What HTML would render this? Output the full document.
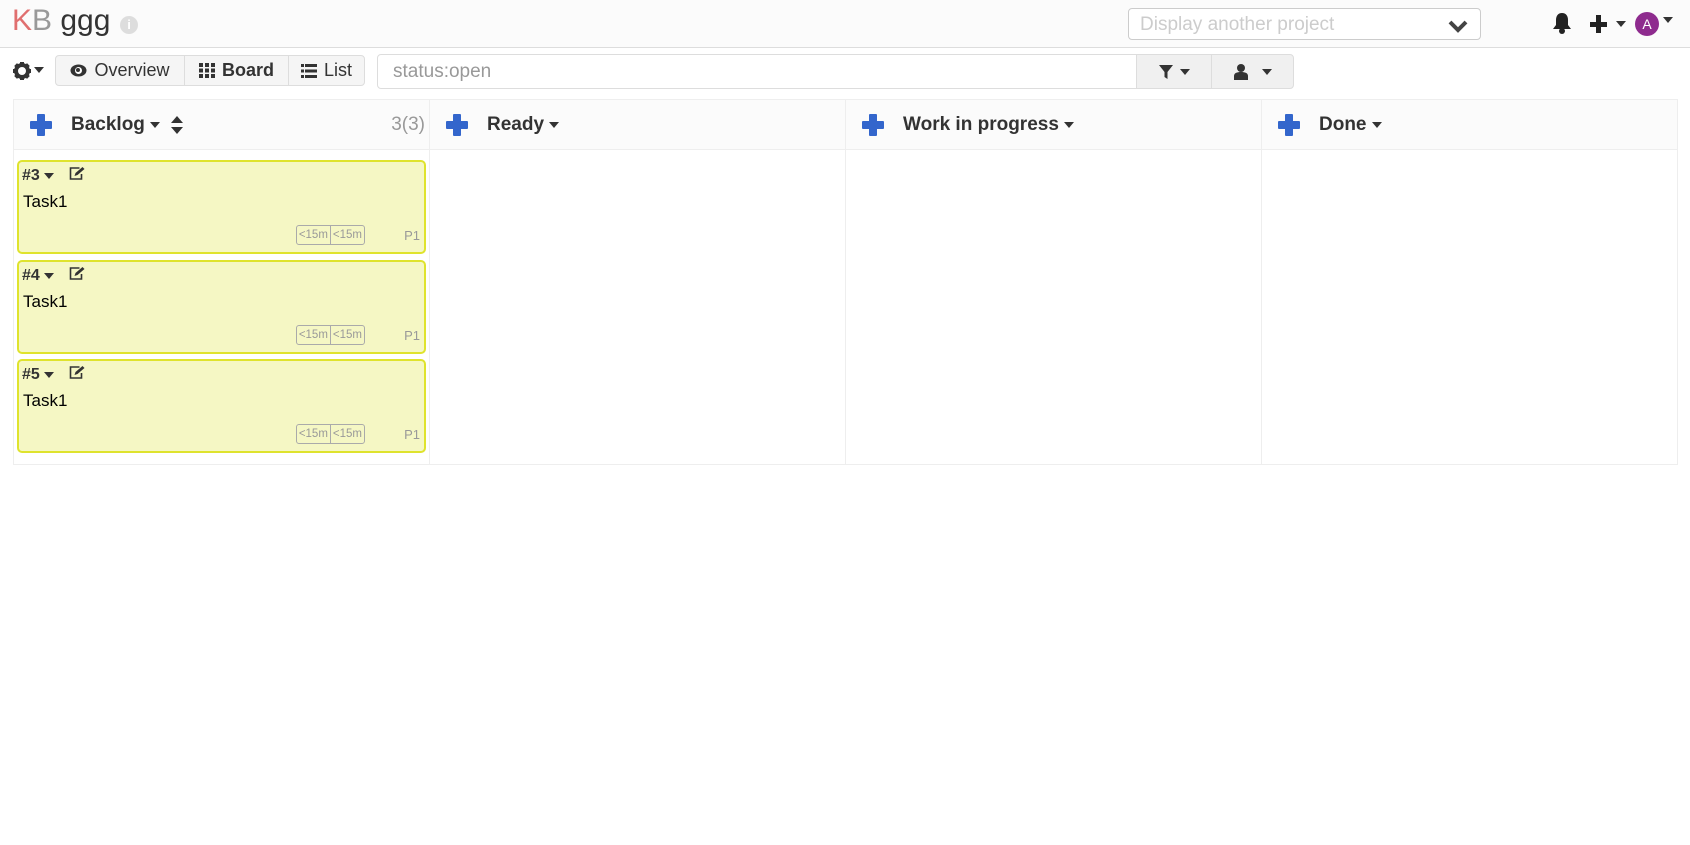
<!DOCTYPE html>
<html><head><meta charset="utf-8"><style>
*{box-sizing:border-box;margin:0;padding:0}
body{width:1690px;height:845px;background:#fff;font-family:"Liberation Sans",Arial,sans-serif;color:#333;position:relative;overflow:hidden}
.abs{position:absolute}
.hdr{left:0;top:0;width:1690px;height:48px;background:#fbfbfb;border-bottom:1px solid #ddd}
.caret{display:inline-block;width:0;height:0;border-left:5px solid transparent;border-right:5px solid transparent;border-top:6px solid #333;vertical-align:middle}
.btn{position:absolute;top:55px;height:31px;border:1px solid #ddd;background:#f5f5f5;font-size:18px;display:flex;align-items:center;justify-content:center;gap:7px}
.col{position:absolute;top:99px;height:366px;width:416px;border:1px solid #eee;border-right:none}
.colh{height:50px;background:#fbfbfb;border-bottom:1px solid #eee;display:flex;align-items:center;padding-left:16px;font-weight:bold;font-size:19px;color:#333}
.plus{width:22px;height:22px;position:relative;margin-right:19px}
.plus:before{content:"";position:absolute;left:7px;top:0;width:8px;height:22px;background:#3366cc;border-radius:1px}
.plus:after{content:"";position:absolute;left:0;top:7px;width:22px;height:8px;background:#3366cc;border-radius:1px}
.card{position:absolute;left:17px;width:409px;height:94px;background:#f5f7c4;border:2px solid #dfe32d;border-radius:5px}
.card .id{position:absolute;left:3px;top:4px;font-weight:bold;font-size:16px}
.card .t{position:absolute;left:4px;top:30px;font-size:17px;color:#000}
.card .bd{position:absolute;right:59px;bottom:7px;height:20px;border:1px solid #aaa;border-radius:3px;font-size:11.5px;color:#999;display:flex}
.card .bd span{padding:0 2px;line-height:18px}
.card .p{position:absolute;right:4px;bottom:9px;font-size:13px;color:#999}
</style></head><body>
<div class="abs hdr"></div>
<div class="abs" style="left:12px;top:4px;font-size:30px;color:#333;letter-spacing:0"><span style="color:#e06f6f">K</span><span style="color:#999">B</span> ggg</div>
<div class="abs" style="left:120px;top:16px;width:18px;height:18px;border-radius:50%;background:#ddd;color:#fff;font-size:13px;font-weight:bold;text-align:center;line-height:18px">i</div>
<div class="abs" style="left:1128px;top:8px;width:353px;height:32px;border:1px solid #ccc;border-radius:4px;background:#fff;font-size:19px;color:#ccc;padding:5px 11px">Display another project
<svg class="abs" style="right:12px;top:10px" width="20" height="14" viewBox="0 0 20 14"><path d="M2 3l8 8 8-8" stroke="#444" stroke-width="4" fill="none"/></svg></div>
<svg class="abs" style="left:1552px;top:12px" width="20" height="22" viewBox="0 0 20 22"><path d="M10 1c-4 0-6 3-6 7v5l-3 4h18l-3-4V8c0-4-2-7-6-7z" fill="#222"/><circle cx="10" cy="19" r="3" fill="#222"/></svg>
<div class="abs" style="left:1590px;top:22px;width:17px;height:5px;background:#222"></div>
<div class="abs" style="left:1596px;top:15px;width:5px;height:18px;background:#222"></div>
<span class="caret abs" style="left:1616px;top:21px"></span>
<div class="abs" style="left:1635px;top:12px;width:24px;height:24px;border-radius:50%;background:#8e2b8e;color:#fff;font-size:14px;text-align:center;line-height:24px">A</div>
<span class="caret abs" style="left:1663px;top:17px"></span>

<svg class="abs" style="left:12px;top:61px" width="20" height="20" viewBox="0 0 20 20"><circle cx="10" cy="10" r="6" fill="none" stroke="#333" stroke-width="4"/><g stroke="#333" stroke-width="4"><path d="M10 1v4M10 15v4M1 10h4M15 10h4M3.6 3.6l3 3M13.4 13.4l3 3M3.6 16.4l3-3M13.4 6.6l3-3"/></g></svg>
<span class="caret abs" style="left:34px;top:67px"></span>
<div class="btn" style="left:55px;width:130px;border-radius:4px 0 0 4px"><svg width="17" height="13" viewBox="0 0 17 13"><ellipse cx="8.5" cy="6.5" rx="8" ry="6" fill="#333"/><circle cx="8.5" cy="6.5" r="3.5" fill="#fff"/><circle cx="8" cy="6" r="2" fill="#333"/></svg>Overview</div>
<div class="btn" style="left:184px;width:105px;font-weight:bold;background:#f5f5f5"><svg width="16" height="15" viewBox="0 0 16 15"><g fill="#333"><rect x="0" y="0" width="4" height="4"/><rect x="6" y="0" width="4" height="4"/><rect x="12" y="0" width="4" height="4"/><rect x="0" y="5.5" width="4" height="4"/><rect x="6" y="5.5" width="4" height="4"/><rect x="12" y="5.5" width="4" height="4"/><rect x="0" y="11" width="4" height="4"/><rect x="6" y="11" width="4" height="4"/><rect x="12" y="11" width="4" height="4"/></g></svg>Board</div>
<div class="btn" style="left:288px;width:77px;border-radius:0 4px 4px 0"><svg width="16" height="14" viewBox="0 0 16 14"><g fill="#333"><rect x="0" y="0" width="3" height="3"/><rect x="4" y="0" width="12" height="3"/><rect x="0" y="5.5" width="3" height="3"/><rect x="4" y="5.5" width="12" height="3"/><rect x="0" y="11" width="3" height="3"/><rect x="4" y="11" width="12" height="3"/></g></svg>List</div>
<div class="abs" style="left:377px;top:54px;width:760px;height:35px;border:1px solid #ddd;border-radius:4px 0 0 4px;font-size:19px;color:#999;padding:6px 15px">status:open</div>
<div class="btn" style="left:1136px;top:54px;height:35px;width:76px;background:#f0f0f0"><svg width="14" height="14" viewBox="0 0 14 14"><path d="M0 0h14L8.5 7v7l-3-2V7z" fill="#333"/></svg><span class="caret"></span></div>
<div class="btn" style="left:1211px;top:54px;height:35px;width:83px;background:#f0f0f0;border-radius:0 4px 4px 0;gap:14px"><svg width="14" height="16" viewBox="0 0 14 16"><circle cx="7" cy="4" r="4" fill="#333"/><path d="M0 16v-4c0-3 3-4 7-4s7 1 7 4v4z" fill="#333"/></svg><span class="caret"></span></div>

<div class="col" style="left:13px"><div class="colh"><div class="plus"></div>Backlog&nbsp;<span class="caret"></span>&nbsp;&nbsp;<svg width="12" height="18" viewBox="0 0 12 18"><path d="M6 0l6 7H0zM6 18l6-7H0z" fill="#333"/></svg><span style="margin-left:auto;margin-right:4px;font-weight:normal;color:#999;font-size:19px">3(3)</span></div></div>
<div class="col" style="left:429px"><div class="colh"><div class="plus"></div>Ready&nbsp;<span class="caret"></span></div></div>
<div class="col" style="left:845px"><div class="colh"><div class="plus"></div>Work in progress&nbsp;<span class="caret"></span></div></div>
<div class="col" style="left:1261px;width:417px;border-right:1px solid #eee"><div class="colh"><div class="plus"></div>Done&nbsp;<span class="caret"></span></div></div>

<div class="card" style="top:160px"><div class="id">#3 <span class="caret"></span>&nbsp;&nbsp; <svg width="17" height="15" viewBox="0 0 16 15" style="vertical-align:-1px"><path d="M11 2H2v11h11V8" fill="none" stroke="#333" stroke-width="1.6"/><path d="M6 10l1-3 7-6 2 2-7 6z" fill="#333"/></svg></div><div class="t">Task1</div><div class="bd"><span>&lt;15m</span><span style="border-left:1px solid #aaa">&lt;15m</span></div><div class="p">P1</div></div>
<div class="card" style="top:260px"><div class="id">#4 <span class="caret"></span>&nbsp;&nbsp; <svg width="17" height="15" viewBox="0 0 16 15" style="vertical-align:-1px"><path d="M11 2H2v11h11V8" fill="none" stroke="#333" stroke-width="1.6"/><path d="M6 10l1-3 7-6 2 2-7 6z" fill="#333"/></svg></div><div class="t">Task1</div><div class="bd"><span>&lt;15m</span><span style="border-left:1px solid #aaa">&lt;15m</span></div><div class="p">P1</div></div>
<div class="card" style="top:359px"><div class="id">#5 <span class="caret"></span>&nbsp;&nbsp; <svg width="17" height="15" viewBox="0 0 16 15" style="vertical-align:-1px"><path d="M11 2H2v11h11V8" fill="none" stroke="#333" stroke-width="1.6"/><path d="M6 10l1-3 7-6 2 2-7 6z" fill="#333"/></svg></div><div class="t">Task1</div><div class="bd"><span>&lt;15m</span><span style="border-left:1px solid #aaa">&lt;15m</span></div><div class="p">P1</div></div>
</body></html>
